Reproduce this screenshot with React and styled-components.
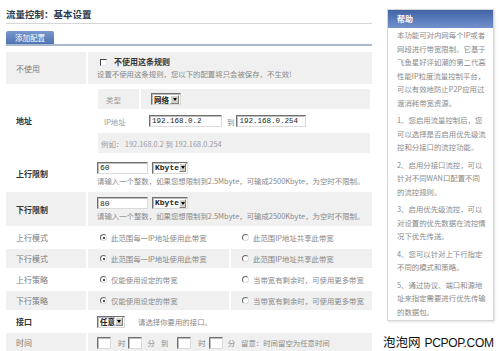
import styled, { createGlobalStyle } from "styled-components";

const GlobalStyle = createGlobalStyle`
  html, body {
    margin: 0;
    padding: 0;
    background: #fff;
  }
  body {
    width: 500px;
    height: 351px;
    overflow: hidden;
    font-family: "Noto Sans CJK SC", "Liberation Sans", sans-serif;
  }
`;

const Page = styled.div`
  display: flex;
  align-items: flex-start;
  width: 500px;
  height: 351px;
  overflow: hidden;
`;

const Main = styled.div`
  width: 366px;
  margin-left: 6px;
  padding-top: 6px;
`;

const Title = styled.div`
  height: 16px;
  line-height: 16px;
  padding-bottom: 1px;
  font-size: 9.5px;
  font-weight: bold;
  color: #303a4c;
  border-bottom: 1px solid #d6d6d6;
`;

const TabBar = styled.div`
  margin-top: 7px;
  display: flex;
  border-bottom: 2px solid #a9b8cb;
`;

const Tab = styled.div`
  width: 48px;
  height: 13px;
  line-height: 13px;
  text-align: center;
  font-size: 7.5px;
  color: #fff;
  background: linear-gradient(#7797cd, #4f74b4);
  border-radius: 2px 2px 0 0;
`;

const Table = styled.div`
  margin-top: 6px;
  display: flex;
  flex-direction: column;
  gap: 2px;
`;

const Row = styled.div`
  display: grid;
  grid-template-columns: 80px 141px 141px;
  column-gap: 2px;
  height: ${(p) => p.$h || 19}px;

  & > * {
    background: ${(p) => (p.$shade ? "#f0f0f0" : "#fff")};
  }
`;

const Label = styled.div`
  display: flex;
  align-items: center;
  padding-left: 10px;
  font-size: 8px;
  color: ${(p) => (p.$strong ? "#333" : "#7a7a7a")};
  font-weight: ${(p) => (p.$strong ? "bold" : "normal")};
`;

const Cell = styled.div`
  grid-column: span ${(p) => p.$span || 1};
  display: flex;
  flex-direction: ${(p) => (p.$column ? "column" : "row")};
  justify-content: ${(p) => (p.$column ? "center" : "flex-start")};
  align-items: ${(p) => (p.$column ? "flex-start" : "center")};
  gap: ${(p) => (p.$column ? "2px" : "0")};
  padding-left: 9px;
  font-size: 7.4px;
  color: #888;
  white-space: nowrap;
`;

const Line = styled.div`
  display: flex;
  align-items: center;
  height: ${(p) => p.$h || 10}px;
  line-height: 10px;
`;

const Strong = styled.span`
  font-size: 8px;
  font-weight: bold;
  color: #333;
`;

const Check = styled.span`
  width: 7px;
  height: 7px;
  margin: 0 7px 0 3px;
  box-sizing: border-box;
  background: #fff;
  border: 1px solid;
  border-color: #444 #e8e8e8 #e8e8e8 #444;
`;

const Radio = styled.span`
  position: relative;
  width: 7px;
  height: 7px;
  margin: 0 4px 0 ${(p) => p.$indent || 3}px;
  box-sizing: border-box;
  border-radius: 50%;
  background: #fff;
  border: 1px solid;
  border-color: #666 #ddd #ddd #666;

  &::after {
    content: "";
    display: ${(p) => (p.$on ? "block" : "none")};
    position: absolute;
    left: 1.5px;
    top: 1.5px;
    width: 2px;
    height: 2px;
    border-radius: 50%;
    background: #111;
  }
`;

const TextBox = styled.input`
  width: ${(p) => p.$w}px;
  height: 12px;
  margin: 0;
  padding: 0 0 0 2px;
  box-sizing: border-box;
  border: 1px solid;
  border-color: #707070 #dadada #dadada #707070;
  box-shadow: inset 1px 1px 0 #bdbdbd;
  background: #fff;
  font-family: "Liberation Mono", monospace;
  font-size: ${(p) => p.$fs || 7.5}px;
  color: #222;
  outline: none;
`;

const Select = styled.div`
  display: inline-flex;
  align-items: center;
  width: ${(p) => p.$w}px;
  height: 12px;
  box-sizing: border-box;
  padding-left: 2px;
  border: 1px solid;
  border-color: #707070 #dadada #dadada #707070;
  box-shadow: inset 1px 1px 0 #bdbdbd;
  background: #fff;
  font-family: ${(p) => (p.$mono ? '"Liberation Mono", monospace' : '"Noto Sans CJK SC", sans-serif')};
  font-size: ${(p) => (p.$mono ? 8 : 7.5)}px;
  font-weight: bold;
  color: #222;
`;

const Arrow = styled.span`
  display: flex;
  align-items: center;
  justify-content: center;
  width: 9px;
  height: 9px;
  margin: 0 1px 0 auto;
  box-sizing: border-box;
  background: #d4d0c8;
  border: 1px solid;
  border-color: #fff #808080 #808080 #fff;

  &::after {
    content: "";
    border-left: 2.5px solid transparent;
    border-right: 2.5px solid transparent;
    border-top: 3px solid #000;
  }
`;

const Gap = styled.span`
  display: inline-block;
  width: ${(p) => p.$w}px;
`;

const AddrCell = styled.div`
  grid-column: span 2;
  display: flex;
  flex-direction: column;
  gap: 2px;
  padding: 3px 2px 0 10px;
`;

const SubRow = styled.div`
  display: grid;
  grid-template-columns: 41px 1fr;
  column-gap: 2px;
  height: 20px;

  & > * {
    background: ${(p) => (p.$shade ? "#f0f0f0" : "#fff")};
  }
`;

const SubLabel = styled.div`
  grid-column: span ${(p) => p.$span || 1};
  display: flex;
  align-items: center;
  padding-left: ${(p) => p.$pad || 7}px;
  font-size: 7.4px;
  color: #9a9a9a;
  white-space: nowrap;
`;

const SubValue = styled.div`
  display: flex;
  align-items: center;
  padding-left: ${(p) => p.$pad || 8}px;
  font-size: 7.4px;
  color: #888;
`;

const Side = styled.div`
  display: flex;
  flex-direction: column;
  width: 107px;
  margin-left: 15px;
  padding-top: 9px;
`;

const HelpBox = styled.div`
  height: 312px;
  box-sizing: border-box;
  background: #fff;
  border: 1px solid #d6d6d6;
  box-shadow: 1px 1px 2px rgba(0, 0, 0, 0.12);
`;

const HelpHead = styled.div`
  height: 18px;
  line-height: 18px;
  padding-left: 9px;
  font-size: 8px;
  font-weight: bold;
  color: #fff;
  background: linear-gradient(#4264a6, #7191cb);
`;

const HelpBody = styled.div`
  padding: 0 4px 0 9px;
  font-size: 7.4px;
  line-height: 13.5px;
  color: #8a8a8a;
`;

const Para = styled.div`
  margin-bottom: 4px;
  white-space: nowrap;
`;

const Mark = styled.div`
  display: flex;
  align-items: baseline;
  gap: 4px;
  margin: 11px 0 0 -4px;
  font-size: 12.5px;
  color: #111;
  white-space: nowrap;
`;

const MarkLatin = styled.span`
  font-family: "Liberation Sans", sans-serif;
  font-size: 12px;
  letter-spacing: -0.3px;
`;

const help = [
  [
    "本功能可对内网每个IP或者",
    "网段进行带宽限制。它基于",
    "飞鱼星好评如潮的第二代高",
    "性能IP粒度流量控制平台，",
    "可以有效地防止P2P应用过",
    "渡消耗带宽资源。",
  ],
  ["1、您启用流量控制后，您", "可以选择是否启用优先级流", "控和分接口的流控功能。"],
  ["2、启用分接口流控，可以", "针对不同WAN口配置不同", "的流控规则。"],
  ["3、启用优先级流控，可以", "对设置的优先数据在流控情", "况下优先传送。"],
  ["4、您可以针对上下行指定", "不同的模式和策略。"],
  ["5、通过协议、端口和源地", "址来指定需要进行优先传输", "的数据包。"],
];

const limitHint = "请输入一个整数，如果您想限制到2.5Mbyte，可输成2500Kbyte，为空时不限制。";

function RadioRow({ label, shade, first, second }) {
  return (
    <Row $shade={shade}>
      <Label>{label}</Label>
      <Cell>
        <Radio $on />
        {first}
      </Cell>
      <Cell>
        <Radio $indent={2} />
        {second}
      </Cell>
    </Row>
  );
}

function LimitRow({ label, value, shade, height }) {
  return (
    <Row $shade={shade} $h={height}>
      <Label $strong>{label}</Label>
      <Cell $span={2} $column>
        <Line $h={12}>
          <TextBox $w={51} $fs={8} defaultValue={value} readOnly />
          <Gap $w={4} />
          <Select $w={36} $mono>
            Kbyte
            <Arrow />
          </Select>
        </Line>
        <Line>{limitHint}</Line>
      </Cell>
    </Row>
  );
}

export default function App() {
  return (
    <Page>
      <GlobalStyle />
      <Main>
        <Title>流量控制：基本设置</Title>
        <TabBar>
          <Tab>添加配置</Tab>
        </TabBar>
        <Table>
          <Row $shade $h={32}>
            <Label>不使用</Label>
            <Cell $span={2} $column>
              <Line>
                <Check />
                <Strong>不使用这条规则</Strong>
              </Line>
              <Line>设置不使用这条规则，您以下的配置将只会被保存，不生效!</Line>
            </Cell>
          </Row>
          <Row $h={69}>
            <Label $strong>地址</Label>
            <AddrCell>
              <SubRow $shade>
                <SubLabel $pad={8}>类型</SubLabel>
                <SubValue $pad={10}>
                  <Select $w={30}>
                    网络
                    <Arrow />
                  </Select>
                </SubValue>
              </SubRow>
              <SubRow>
                <SubLabel $pad={6}>IP地址</SubLabel>
                <SubValue>
                  <TextBox $w={73} defaultValue="192.168.0.2" readOnly />
                  <Gap $w={5} />到<Gap $w={2} />
                  <TextBox $w={70} defaultValue="192.168.0.254" readOnly />
                </SubValue>
              </SubRow>
              <SubRow $shade>
                <SubLabel $span={2} $pad={3}>
                  例如： 192.168.0.2 到 192.168.0.254
                </SubLabel>
              </SubRow>
            </AddrCell>
          </Row>
          <LimitRow label="上行限制" value="60" height={33} />
          <LimitRow label="下行限制" value="80" height={34} shade />
          <RadioRow label="上行模式" first="此范围每一IP地址使用此带宽" second="此范围IP地址共享此带宽" />
          <RadioRow label="下行模式" shade first="此范围每一IP地址使用此带宽" second="此范围IP地址共享此带宽" />
          <RadioRow label="上行策略" first="仅能使用设定的带宽" second="当带宽有剩余时，可使用更多带宽" />
          <RadioRow label="下行策略" shade first="仅能使用设定的带宽" second="当带宽有剩余时，可使用更多带宽" />
          <Row>
            <Label $strong>接口</Label>
            <Cell $span={2}>
              <Select $w={28}>
                任意
                <Arrow />
              </Select>
              <Gap $w={13} />
              请选择你要用的接口。
            </Cell>
          </Row>
          <Row $shade>
            <Label>时间</Label>
            <Cell $span={2}>
              <TextBox $w={14} readOnly />
              <Gap $w={7} />时<Gap $w={3} />
              <TextBox $w={14} readOnly />
              <Gap $w={5} />分<Gap $w={6} />到<Gap $w={9} />
              <TextBox $w={14} readOnly />
              <Gap $w={7} />时<Gap $w={3} />
              <TextBox $w={14} readOnly />
              <Gap $w={5} />分<Gap $w={6} />留意：时间留空为任意时间
            </Cell>
          </Row>
        </Table>
      </Main>
      <Side>
        <HelpBox>
          <HelpHead>帮助</HelpHead>
          <HelpBody>
            {help.map((lines, i) => (
              <Para key={i}>
                {lines.map((l) => (
                  <div key={l}>{l}</div>
                ))}
              </Para>
            ))}
          </HelpBody>
        </HelpBox>
        <Mark>
          泡泡网<MarkLatin>PCPOP.COM</MarkLatin>
        </Mark>
      </Side>
    </Page>
  );
}
